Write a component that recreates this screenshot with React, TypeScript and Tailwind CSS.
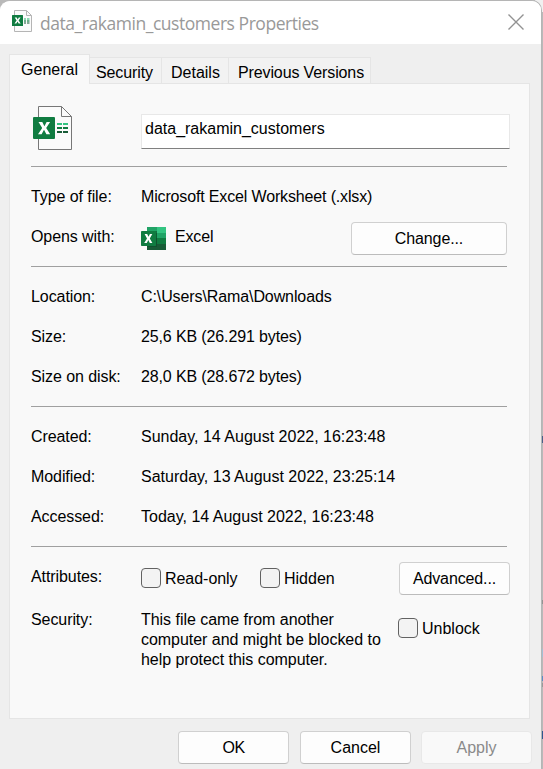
import type { ReactNode } from "react";

function FileIcon({ className }: { className: string }) {
  return (
    <svg viewBox="0 0 40 44" className={className} fill="none">
      <path d="M5.5.5H28.5L38.5 10.5V43.5H5.5Z" fill="#fbfbfb" stroke="#777" />
      <path d="M28.5.5V10.5H38.5" stroke="#777" />
      <rect x="0" y="11" width="22" height="22" rx="1" fill="#107c41" />
      <path d="M5.5 16H9.3L11.4 20.2L13.6 16H17.1L13.2 22L17.2 28.2H13.4L11 23.8L8.6 28.2H5L9.2 22Z" fill="#fff" />
      <path d="M24 18H29M30 18H35" stroke="#33c481" strokeWidth="2" />
      <path d="M24 22H29M30 22H35" stroke="#107c41" strokeWidth="2" />
      <path d="M24 26H29M30 26H35" stroke="#185c37" strokeWidth="2" />
    </svg>
  );
}

function SmallFileIcon() {
  return (
    <svg viewBox="0 0 20 22" className="mb-[3px] h-[22px] w-5 shrink-0" fill="none">
      <path d="M2.5.5H14.5L19.5 5.5V21.5H2.5Z" fill="#fbfbfb" stroke="#b5b5b5" />
      <path d="M14.5.5V5.5H19.5" stroke="#b5b5b5" />
      <path d="M12 9H14M15 9H17.5" stroke="#8fdab4" strokeWidth="2" />
      <path d="M12 11H14M15 11H17.5" stroke="#6fae8c" strokeWidth="2" />
      <path d="M12 13H14M15 13H17.5" stroke="#85a896" strokeWidth="2" />
      <rect y="5" width="11" height="11" rx=".5" fill="#107c41" />
      <path d="M2.7 7.5H4.7L5.7 9.5L6.8 7.5H8.6L6.6 10.5L8.7 13.6H6.7L5.5 11.5L4.3 13.6H2.5L4.6 10.5Z" fill="#fff" />
    </svg>
  );
}

function ExcelIcon() {
  return (
    <svg viewBox="0 0 25 23" className="h-[23px] w-[25px] shrink-0">
      <path d="M6 0H16V6H6Z" fill="#21a366" />
      <path d="M16 0H25V6H16Z" fill="#33c481" />
      <path d="M6 6H16V11H6Z" fill="#107c41" />
      <path d="M16 6H25V11H16Z" fill="#21a366" />
      <path d="M6 11H16V17H6Z" fill="#185c37" />
      <path d="M16 11H25V17H16Z" fill="#107c41" />
      <path d="M6 17H25V23H6Z" fill="#185c37" />
      <path d="M6 4H16V20H6Z" fill="#0b4b29" opacity=".6" />
      <rect y="4" width="15" height="15" rx=".8" fill="#107c41" />
      <path d="M3.6 7H6.2L7.5 9.8L8.9 7H11.3L8.8 11.4L11.4 16H8.8L7.3 12.9L5.8 16H3.2L6 11.4Z" fill="#fff" />
    </svg>
  );
}

function Row({ label, children }: { label: string; children: ReactNode }) {
  return (
    <div className="flex h-10 items-center">
      <div className="w-[110px] shrink-0 tracking-[-0.08px]">{label}</div>
      {children}
    </div>
  );
}

function Section({ children }: { children: ReactNode }) {
  return <div className="mr-[22px] border-b border-[#a0a0a0] pt-2.5 pb-[9px]">{children}</div>;
}

function Box() {
  return <span className="h-5 w-5 shrink-0 rounded-[4px] border border-[#626262] bg-[#f3f3f3]" />;
}

function Button({ className, children }: { className: string; children: ReactNode }) {
  return (
    <button className={`flex h-[33px] shrink-0 items-center justify-center rounded-[4px] border ${className}`}>
      {children}
    </button>
  );
}

const normal = "border-[#d0d0d0] border-b-[#bcbcbc] bg-[#fdfdfd]";

export default function App() {
  return (
    <div className="relative h-[769px] w-[543px] overflow-hidden bg-[#b9b9b9] font-['Liberation_Sans',Arial,sans-serif] text-[16px] leading-5 text-black">
      {/* slivers of the window behind the dialog */}
      <span className="absolute top-0 right-0 h-3 w-2 bg-[#f0f0f0]" />
      <span className="absolute top-[436px] right-0 h-[7px] w-0.5 bg-[#4a5f88]" />
      <span className="absolute top-[600px] right-0 h-1 w-0.5 bg-[#939393]" />
      <span className="absolute top-[649px] right-0 h-2 w-px bg-[#a3bfd4]" />
      <span className="absolute top-[676px] right-0 h-[5px] w-0.5 bg-[#5c8cc4]" />
      <span className="absolute top-[683px] right-0 h-1 w-0.5 bg-[#999]" />
      <span className="absolute top-[731px] right-0 h-2 w-px bg-[#30588f]" />

      <div className="relative h-[769px] w-[542px] overflow-hidden rounded-t-[10px] border-t border-r border-[#b5b5b5] bg-[#efefef]">
        <div className="flex h-[768px] w-[541px] flex-col">
          <header className="flex h-[43px] shrink-0 items-center bg-white pl-3">
            <SmallFileIcon />
            <h1 className="ml-2 font-['Open_Sans','Noto_Sans',sans-serif] text-[17.5px] tracking-[-0.46px] text-[#999]">
              data_rakamin_customers Properties
            </h1>
            <svg viewBox="0 0 16 16" className="mr-[17px] mb-px ml-auto h-4 w-4">
              <path d="M.5.5L15.5 15.5M15.5.5L.5 15.5" stroke="#929292" strokeWidth="1.4" />
            </svg>
          </header>

          <nav className="z-10 -mb-px flex h-10 shrink-0 items-end pl-[9px] tracking-[-0.12px]">
            <div className="flex h-[30px] w-[81px] justify-center border border-b-0 border-[#e5e5e5] bg-[#f9f9f9] pt-[5px] tracking-normal">General</div>
            <div className="flex h-[27px] w-[72px] border border-l-0 border-[#e5e5e5] bg-[#f2f2f2] pt-[5px] pl-1.5">Security</div>
            <div className="flex h-[27px] w-[67px] border border-l-0 border-[#e5e5e5] bg-[#f2f2f2] pt-[5px] pl-[9px] tracking-normal">Details</div>
            <div className="flex h-[27px] w-[142px] border border-l-0 border-[#e5e5e5] bg-[#f2f2f2] pt-[5px] pl-[9px]">Previous Versions</div>
          </nav>

          <main className="ml-[9px] h-[636px] w-[521px] shrink-0 border border-[#e5e5e5] bg-[#f9f9f9] pl-[21px]">
            <div className="mr-[22px] flex h-[83px] items-start border-b border-[#a0a0a0]">
              <FileIcon className="mt-[22px] ml-0.5 h-11 w-10 shrink-0" />
              <div className="mt-[30px] -mr-[3px] ml-[68px] flex h-[35px] w-[369px] shrink-0 items-center border border-[#e8e8e8] border-b-[#808080] bg-white pb-1.5 pl-[3px]">
                data_rakamin_customers
              </div>
            </div>

            <Section>
              <Row label="Type of file:">
                <span className="tracking-[-0.15px]">Microsoft Excel Worksheet (.xlsx)</span>
              </Row>
              <Row label="Opens with:">
                <div className="mt-[3px]"><ExcelIcon /></div>
                <span className="ml-[9px] tracking-[-0.15px]">Excel</span>
                <Button className={`mt-[3px] ml-auto w-[156px] tracking-[-0.12px] ${normal}`}>Change...</Button>
              </Row>
            </Section>

            <Section>
              <Row label="Location:">
                <span className="tracking-[-0.1px]">C:\Users\Rama\Downloads</span>
              </Row>
              <Row label="Size:">
                <span className="tracking-[-0.13px]">25,6 KB (26.291 bytes)</span>
              </Row>
              <Row label="Size on disk:">
                <span className="tracking-[-0.13px]">28,0 KB (28.672 bytes)</span>
              </Row>
            </Section>

            <Section>
              <Row label="Created:">Sunday, 14 August 2022, 16:23:48</Row>
              <Row label="Modified:">Saturday, 13 August 2022, 23:25:14</Row>
              <Row label="Accessed:">Today, 14 August 2022, 16:23:48</Row>
            </Section>

            <div className="pt-2.5">
              <Row label="Attributes:">
                <label className="mt-0.5 flex w-[119px] items-center gap-1 tracking-[-0.04px]">
                  <Box />
                  <span className="pt-0.5">Read-only</span>
                </label>
                <label className="mt-0.5 flex w-[139px] items-center gap-1">
                  <Box />
                  <span className="pt-0.5">Hidden</span>
                </label>
                <Button className={`mt-[3px] w-[111px] tracking-[-0.12px] ${normal}`}>Advanced...</Button>
              </Row>
              <div className="mt-[13px] flex">
                <div className="w-[110px] shrink-0 tracking-[-0.08px]">Security:</div>
                <p className="w-[257px] shrink-0 tracking-[-0.04px]">
                  This file came from another<br />computer and might be blocked to<br />help protect this computer.
                </p>
                <label className="mt-2 flex h-5 items-center gap-1">
                  <Box />
                  <span className="pt-0.5">Unblock</span>
                </label>
              </div>
            </div>
          </main>

          <footer className="mt-3 flex shrink-0 justify-end pr-[9px]">
            <Button className={`mr-[11px] w-[111px] tracking-[-0.5px] ${normal}`}>OK</Button>
            <Button className={`mr-2.5 w-[111px] ${normal}`}>Cancel</Button>
            <Button className="w-[111px] border-[#e8e8e8] bg-[#f9f9f9] text-[#8a8a8a]">Apply</Button>
          </footer>
        </div>
      </div>
    </div>
  );
}
